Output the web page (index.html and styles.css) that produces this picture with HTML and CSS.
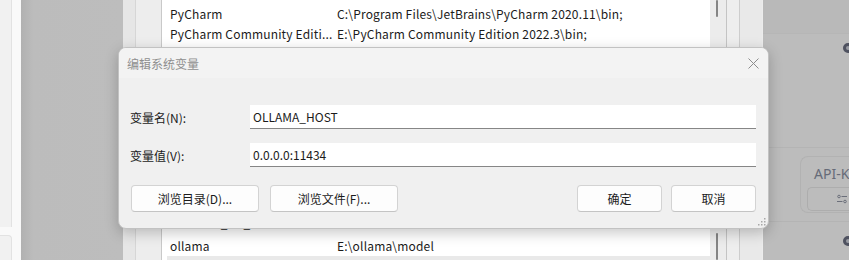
FILE: index.html
```html
<!DOCTYPE html>
<html>
<head>
  <title>编辑系统变量</title>
  <link rel="stylesheet" href="styles.css">
</head>
<body>
  <div class="desktop">
    <div class="side-left">
      <div class="side-panel"></div>
      <div class="side-card"></div>
    </div>
    <div class="shade"></div>

    <div class="env-window">
      <div class="pane"></div>
      <div class="gutter"></div>
      <div class="var-list">
        <div class="list-group">
          <div class="var-row"><span class="var-name">PyCharm</span><span>C:\Program Files\JetBrains\PyCharm 2020.11\bin;</span></div>
          <div class="var-row"><span class="var-name">PyCharm Community Editi...</span><span>E:\PyCharm Community Edition 2022.3\bin;</span></div>
        </div>
        <div class="list-group bottom">
          <div class="var-row gap"><span class="var-name">NUMBER_OF_PROCESSORS</span><span>16</span></div>
          <div class="var-row"><span class="var-name">ollama</span><span>E:\ollama\model</span></div>
          <div class="var-row selected"></div>
        </div>
      </div>
      <div class="scroll-track">
        <div class="scroll-thumb top"></div>
        <div class="scroll-thumb bottom"></div>
      </div>
      <div class="frame-col"></div>
      <div class="frame-col wide"></div>
    </div>

    <div class="right-app">
      <div class="right-head"></div>
      <div class="right-row"><span class="dot-icon"></span></div>
      <div class="right-section">
        <div class="key-card">
          <div class="key-title">API-KEY</div>
          <div class="key-btn">
            <svg width="10" height="10" viewBox="0 0 10 10">
              <circle cx="2" cy="2.5" r="1.3" fill="none" stroke="#6b6f7a" stroke-width="1"/>
              <line x1="4.5" y1="2.5" x2="10" y2="2.5" stroke="#6b6f7a" stroke-width="1"/>
              <line x1="0" y1="7.5" x2="5.5" y2="7.5" stroke="#6b6f7a" stroke-width="1"/>
              <circle cx="8" cy="7.5" r="1.3" fill="none" stroke="#6b6f7a" stroke-width="1"/>
            </svg>
          </div>
        </div>
      </div>
      <div class="right-row low"><span class="dot-icon"></span></div>
    </div>
  </div>

  <div class="dialog">
    <div class="dialog-title">
      <span>编辑系统变量</span>
      <svg class="close-icon" width="11" height="11" viewBox="0 0 11 11">
        <line x1="0.5" y1="0.5" x2="10.5" y2="10.5" stroke="#8c8c8c" stroke-width="1"/>
        <line x1="10.5" y1="0.5" x2="0.5" y2="10.5" stroke="#8c8c8c" stroke-width="1"/>
      </svg>
    </div>
    <div class="dialog-body">
      <div class="field">
        <label class="field-label">变量名(N):</label>
        <div class="field-input">OLLAMA_HOST</div>
      </div>
      <div class="field">
        <label class="field-label">变量值(V):</label>
        <div class="field-input">0.0.0.0:11434</div>
      </div>
      <div class="actions">
        <div class="btn wide">浏览目录(D)...</div>
        <div class="btn wide">浏览文件(F)...</div>
        <div class="spacer"></div>
        <div class="btn">确定</div>
        <div class="btn">取消</div>
      </div>
    </div>
    <svg class="grip" width="9" height="9" viewBox="0 0 9 9">
      <rect x="7" y="1" width="1.5" height="1.5" fill="#a8a8a8"/>
      <rect x="4" y="4" width="1.5" height="1.5" fill="#a8a8a8"/>
      <rect x="7" y="4" width="1.5" height="1.5" fill="#a8a8a8"/>
      <rect x="1" y="7" width="1.5" height="1.5" fill="#a8a8a8"/>
      <rect x="4" y="7" width="1.5" height="1.5" fill="#a8a8a8"/>
      <rect x="7" y="7" width="1.5" height="1.5" fill="#a8a8a8"/>
    </svg>
  </div>
</body>
</html>
```

FILE: styles.css
```css
body {
  margin: 0;
  width: 849px;
  height: 260px;
  overflow: hidden;
  position: relative;
  font-family: "Noto Sans CJK SC", "Noto Sans", sans-serif;
  font-size: 12px;
  color: #1b1b1b;
}

.desktop {
  display: flex;
  height: 260px;
}

.desktop > div {
  flex-shrink: 0;
}

/* left edge of the window behind */
.side-left {
  width: 21px;
  display: flex;
  flex-direction: column;
  background: #f9f9f9;
}

.side-panel {
  width: 11px;
  height: 227px;
  background: #f1f1f1;
  border-right: 1px solid #e2e2e2;
}

.side-card {
  width: 11px;
  margin-top: 8px;
  flex: 1;
  background: #f1f1f1;
  border-right: 1px solid #e2e2e2;
  border-top: 1px solid #e2e2e2;
  border-top-right-radius: 4px;
}

.shade {
  width: 102px;
  background: linear-gradient(90deg, #b1b1b1, #bcbcbc 12%, #bdbdbd);
}

/* environment variables window */
.env-window {
  width: 640px;
  display: flex;
  background: #ececec;
  overflow: hidden;
}

.env-window > div {
  flex-shrink: 0;
}

.pane {
  width: 12px;
  background: #e6e6e6;
  border-right: 1px solid #d6d6d6;
}

.gutter {
  width: 25px;
  background: #ededed;
  border-right: 1px solid #c9c9c9;
}

.var-list {
  width: 548px;
  background: #fff;
  display: flex;
  flex-direction: column;
  justify-content: space-between;
  padding-top: 4px;
  overflow: hidden;
}

.list-group {
  display: flex;
  flex-direction: column;
  flex-shrink: 0;
}

.list-group.bottom {
  margin-bottom: -16px;
}

.var-row {
  display: flex;
  height: 20px;
  line-height: 20px;
  padding-left: 8px;
  white-space: nowrap;
  letter-spacing: 0.17px;
}

.var-row.gap {
  margin-bottom: 3px;
}

.var-row.selected {
  margin-left: 5px;
  padding-left: 3px;
  background: #e9e9e9;
}

.var-name {
  width: 167px;
}

.scroll-track {
  width: 16px;
  border-right: 1px solid #c4c4c4;
  display: flex;
  flex-direction: column;
  justify-content: space-between;
}

.scroll-thumb {
  width: 2px;
  margin-left: 6px;
  background: #858585;
  border-radius: 1px;
}

.scroll-thumb.top {
  height: 17px;
}

.scroll-thumb.bottom {
  height: 27px;
}

.frame-col {
  width: 12px;
  border-right: 1px solid #cdcdcd;
  background: #eeeeee;
}

.frame-col.wide {
  width: 22px;
  border-right: none;
  background: #e9e9e9;
}

/* dimmed app on the right */
.right-app {
  flex: 1;
  min-width: 0;
  overflow: hidden;
  background: #bcbcbc;
  display: flex;
  flex-direction: column;
}

.right-head {
  height: 33px;
  border-bottom: 1px solid #b6b6b6;
  background: #b9b9b9;
}

.right-row {
  height: 28px;
  display: flex;
  align-items: center;
  justify-content: flex-end;
}

.right-row.low {
  border-top: 1px solid #b4b4b4;
  height: 37px;
}

.right-section {
  border-top: 1px solid #b4b4b4;
  height: 74px;
  margin-top: 85px;
  padding: 8px 0 0 37px;
  box-sizing: border-box;
}

.dot-icon {
  width: 10px;
  height: 10px;
  border-radius: 50%;
  box-sizing: border-box;
  border: 3px solid #4f5260;
  background: #9a9ca3;
  margin-right: -4px;
}

.key-card {
  height: 57px;
  border: 1px solid #b2b2b2;
  border-right: none;
  border-radius: 8px 0 0 8px;
  padding: 9px 0 0 6px;
  box-sizing: border-box;
}

.key-title {
  font-family: "Noto Sans", sans-serif;
  font-size: 14px;
  line-height: 16px;
  color: #666b78;
  margin-left: 7px;
  white-space: nowrap;
}

.key-btn {
  margin-top: 5px;
  height: 22px;
  border: 1px solid #adadad;
  border-right: none;
  border-radius: 5px 0 0 5px;
  display: flex;
  align-items: center;
  padding-left: 29px;
}

/* dialog */
.dialog {
  position: absolute;
  left: 118px;
  top: 47px;
  width: 651px;
  height: 182px;
  background: #f0f0f0;
  border: 1px solid #c2c2c2;
  box-sizing: border-box;
  border-radius: 8px;
  box-shadow: 0 4px 14px rgba(0, 0, 0, 0.22);
  overflow: hidden;
}

.dialog-title {
  height: 30px;
  background: #f3f3f3;
  display: flex;
  align-items: center;
  justify-content: space-between;
  padding: 0 9px 0 8px;
  color: #8f8f8f;
}

.dialog-body {
  padding: 27px 12px 0 11px;
}

.field {
  display: flex;
  align-items: center;
  margin-bottom: 14px;
}

.field-label {
  width: 120px;
}

.field-input {
  flex: 1;
  height: 23px;
  line-height: 23px;
  background: #fff;
  border-bottom: 1px solid #868686;
  padding-left: 3px;
}

.actions {
  display: flex;
  margin-top: 18px;
  padding-left: 1px;
}

.btn {
  width: 83px;
  height: 25px;
  line-height: 25px;
  text-align: center;
  background: #fdfdfd;
  border: 1px solid #d3d3d3;
  border-bottom-color: #c4c4c4;
  border-radius: 4px;
  margin-left: 9px;
}

.btn.wide {
  width: 126px;
  margin-left: 0;
  margin-right: 11px;
}

.spacer {
  flex: 1;
}

.grip {
  position: absolute;
  right: 2px;
  bottom: 2px;
}
```
